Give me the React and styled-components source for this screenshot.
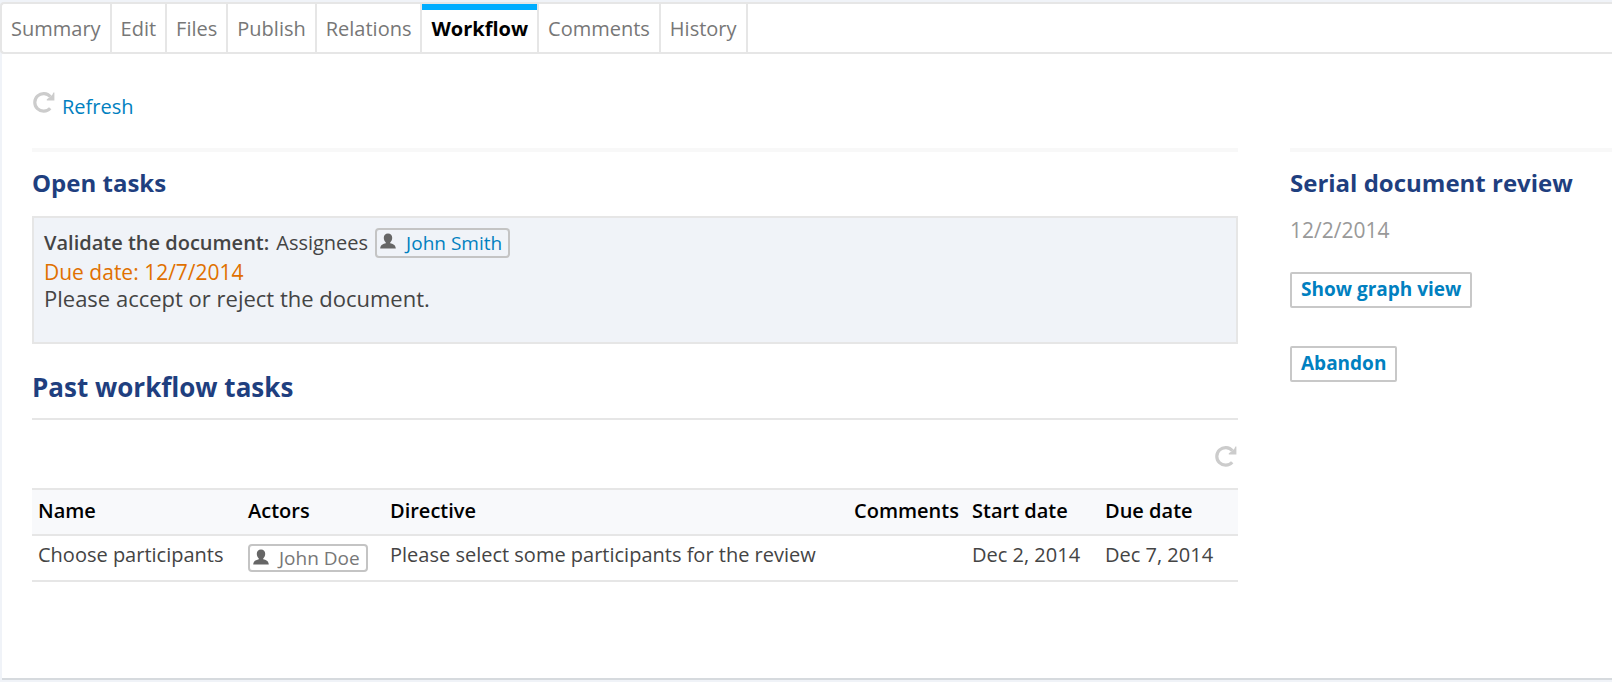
import React from 'react';
import styled, { createGlobalStyle } from 'styled-components';

const tabs = ['Summary', 'Edit', 'Files', 'Publish', 'Relations', 'Workflow', 'Comments', 'History'];

const pastTasks = [
    {
        name: 'Choose participants',
        actor: 'John Doe',
        directive: 'Please select some participants for the review',
        comments: '',
        start: 'Dec 2, 2014',
        due: 'Dec 7, 2014',
    },
];

const RefreshIcon = () => (
    <svg width="24" height="24" viewBox="0 0 24 24" aria-hidden="true">
        <path d="M18.2 18.2A8.8 8.8 0 1 1 18.4 6.8" fill="none" stroke="#ccc" strokeWidth="3.2" />
        <path d="M22.4 2.6V10.4H14.8V9.2L17.4 7.4L20.2 5L21.4 2.6Z" fill="#ccc" />
    </svg>
);

const PersonIcon = () => (
    <svg width="16" height="16" viewBox="0 0 16 16" aria-hidden="true">
        <path
            d="M8 0.4C10.6 0.4 12.2 2 12.2 4.8C12.2 6.8 11.4 8.4 10.2 9.4V10.2C12.8 11 15.6 11.6 15.8 15.4H0.2C0.4 11.6 3.2 11 5.8 10.2V9.4C4.6 8.4 3.8 6.8 3.8 4.8C3.8 2 5.4 0.4 8 0.4Z"
            fill="#666"
        />
    </svg>
);

const App = () => {
    return (
        <>
            <GlobalStyle />
            <Panel>
                <TabBar>
                    {tabs.map((tab) => (
                        <Tab key={tab} href="#" $active={tab === 'Workflow'}>{tab}</Tab>
                    ))}
                </TabBar>
                <Content>
                    <Refresh href="#"><RefreshIcon /><span>Refresh</span></Refresh>
                    <Columns>
                        <Column>
                            <Title>Open tasks</Title>
                            <Task>
                                <TaskLine>
                                    <strong>Validate the document:</strong>
                                    <span>Assignees</span>
                                    <User href="#"><PersonIcon />John Smith</User>
                                </TaskLine>
                                <DueDate>Due date: 12/7/2014</DueDate>
                                <Directive>Please accept or reject the document.</Directive>
                            </Task>
                            <PastTitle>Past workflow tasks</PastTitle>
                            <Tools>
                                <IconButton type="button" aria-label="Refresh past tasks"><RefreshIcon /></IconButton>
                            </Tools>
                            <Table>
                                <colgroup>
                                    <Col $width={210} />
                                    <Col $width={142} />
                                    <Col />
                                    <Col $width={118} />
                                    <Col $width={133} />
                                    <Col $width={139} />
                                </colgroup>
                                <thead>
                                    <tr>
                                        <HeadCell>Name</HeadCell>
                                        <HeadCell>Actors</HeadCell>
                                        <HeadCell>Directive</HeadCell>
                                        <HeadCell>Comments</HeadCell>
                                        <HeadCell>Start date</HeadCell>
                                        <HeadCell>Due date</HeadCell>
                                    </tr>
                                </thead>
                                <tbody>
                                    {pastTasks.map((task) => (
                                        <tr key={task.name}>
                                            <Cell>{task.name}</Cell>
                                            <ActorCell><User as="span" $muted><PersonIcon />{task.actor}</User></ActorCell>
                                            <Cell>{task.directive}</Cell>
                                            <Cell>{task.comments}</Cell>
                                            <Cell>{task.start}</Cell>
                                            <Cell>{task.due}</Cell>
                                        </tr>
                                    ))}
                                </tbody>
                            </Table>
                        </Column>
                        <Column>
                            <Title>Serial document review</Title>
                            <StartDate>12/2/2014</StartDate>
                            <Actions>
                                <Button type="button">Show graph view</Button>
                                <Button type="button">Abandon</Button>
                            </Actions>
                        </Column>
                    </Columns>
                </Content>
            </Panel>
        </>
    )
}

export default App

const GlobalStyle = createGlobalStyle`
    *{
        box-sizing : border-box;
    }
    body{
        margin : 0;
        background-color: #f0f3f8;
        color : #444;
        font-family: "Open Sans", "Noto Sans", sans-serif;
        font-size : 20px;
        line-height: 28px;
    }
    a{
        text-decoration : none;
    }
    strong{
        font-weight: 600;
    }
`

const Panel = styled.main`
    display : flex;
    flex-direction : column;
    min-height: calc(100vh - 4px);
    margin : 2px 0;
`

const TabBar = styled.nav`
    display : flex;
    background-color: white;
    border : 2px solid #e6e6e6;
    border-right : none;
    border-radius: 4px 0 0 4px;
`

const Tab = styled.a`
    margin-right: 2px;
    padding : 5px 9px 9px;
    border-top : 6px solid ${(props) => (props.$active ? '#00adff' : 'transparent')};
    box-shadow: 2px 0 0 #e6e6e6;
    color : ${(props) => (props.$active ? '#000' : '#777')};
    font-weight: ${(props) => (props.$active ? 700 : 400)};
`

const Content = styled.div`
    flex : 1;
    margin-left: 2px;
    padding : 36px 0 40px 30px;
    background-color: white;
    border-bottom : 2px solid #d6dade;
`

const Refresh = styled.a`
    display : flex;
    align-items : flex-start;
    gap : 6px;
    width : fit-content;
    color : #0080c0;
    span{
        padding-top : 3px;
    }
`

const Columns = styled.div`
    display : grid;
    grid-template-columns: minmax(0, 1fr) 322px;
    gap : 52px;
    margin-top : 27px;
`

const Column = styled.section`
    border-top : 4px solid #f8f8f8;
`

const Title = styled.h2`
    margin : 0;
    padding : 15px 0 17px;
    color : #1f3f7f;
    font-size : 24px;
    line-height: 32px;
    font-weight: 700;
`

const Task = styled.div`
    min-height: 128px;
    padding : 10px;
    background-color: #f0f3f8;
    border : 2px solid #e6e6e6;
`

const TaskLine = styled.div`
    display : flex;
    align-items : center;
    gap : 7px;
    height : 30px;
`

const User = styled.a`
    display : inline-flex;
    align-items : center;
    gap : 10px;
    height : ${(props) => (props.$muted ? '28px' : '30px')};
    padding : 0 6px 0 3px;
    border : 2px solid #c4c4c4;
    border-radius: 4px;
    color : ${(props) => (props.$muted ? '#777' : '#0080c0')};
    font-size : 19px;
    white-space: nowrap;
    svg{
        margin-bottom : ${(props) => (props.$muted ? '2px' : '4px')};
    }
`

const DueDate = styled.div`
    color : #e07000;
    font-size : 21px;
`

const Directive = styled.div`
    font-size : 22px;
    line-height: 24px;
`

const PastTitle = styled.h2`
    margin : 0;
    padding : 26px 0 14px;
    border-bottom : 2px solid #e6e6e6;
    color : #1f3f7f;
    font-size : 26px;
    line-height: 34px;
    font-weight: 700;
`

const Tools = styled.div`
    display : flex;
    justify-content: flex-end;
    padding : 24px 0 20px;
`

const IconButton = styled.button`
    display : flex;
    padding : 0;
    border : none;
    background : none;
    cursor : pointer;
`

const Table = styled.table`
    width : 100%;
    table-layout: fixed;
    border-collapse: collapse;
`

const Col = styled.col`
    width : ${(props) => (props.$width ? `${props.$width}px` : 'auto')};
`

const Cell = styled.td`
    height : 46px;
    padding : 5px 0 10px 6px;
    border-top : 2px solid #e6e6e6;
    border-bottom : 2px solid #e6e6e6;
    text-align: left;
    vertical-align: top;
    white-space: nowrap;
`

const HeadCell = styled(Cell).attrs({ as: 'th', scope: 'col' })`
    padding-top : 7px;
    padding-bottom : 9px;
    background-color: #f8f9fb;
    color : #000;
    font-weight: 600;
`

const ActorCell = styled(Cell)`
    padding-top : 8px;
    padding-bottom : 6px;
`

const StartDate = styled.div`
    color : #999;
    font-size : 21px;
`

const Actions = styled.div`
    display : flex;
    flex-direction : column;
    align-items : flex-start;
    gap : 38px;
    padding-top : 28px;
`

const Button = styled.button`
    padding : 2px 9px 4px;
    border : 2px solid #c8c8c8;
    border-radius: 2px;
    background-color: white;
    color : #0080c0;
    font-family : inherit;
    font-size : 19px;
    line-height: 26px;
    font-weight: 700;
    cursor : pointer;
`
